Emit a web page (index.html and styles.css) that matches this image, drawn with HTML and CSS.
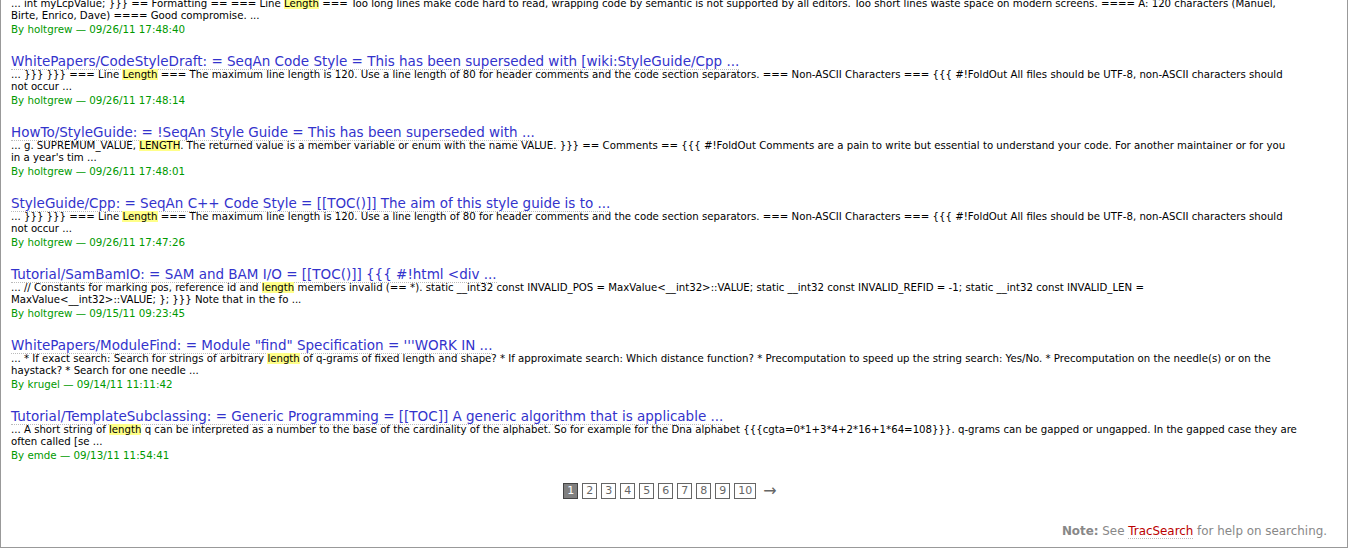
FILE: index.html
```html
<!DOCTYPE html>
<html lang="en">
<head>
<meta charset="utf-8">
<title>Search results</title>
<link rel="stylesheet" href="styles.css">
</head>
<body>
<div class="page">
  <div class="results">
    <div class="result first">
      <div class="excerpt">... int myLcpValue; }}} == Formatting == === Line <span class="hl">Length</span> === Too long lines make code hard to read, wrapping code by semantic is not supported by all editors. Too short lines waste space on modern screens. ==== A: 120 characters (Manuel,<br>Birte, Enrico, Dave) ==== Good compromise. ...</div>
      <div class="meta">By holtgrew — 09/26/11 17:48:40</div>
    </div>
    <div class="result">
      <div class="title"><a href="#">WhitePapers/CodeStyleDraft: = SeqAn Code Style = This has been superseded with [wiki:StyleGuide/Cpp ...</a></div>
      <div class="excerpt">... }}} }}} === Line <span class="hl">Length</span> === The maximum line length is 120. Use a line length of 80 for header comments and the code section separators. === Non-ASCII Characters === {{{ #!FoldOut All files should be UTF-8, non-ASCII characters should<br>not occur ...</div>
      <div class="meta">By holtgrew — 09/26/11 17:48:14</div>
    </div>
    <div class="result">
      <div class="title"><a href="#">HowTo/StyleGuide: = !SeqAn Style Guide = This has been superseded with ...</a></div>
      <div class="excerpt">... g. SUPREMUM_VALUE, <span class="hl">LENGTH</span>. The returned value is a member variable or enum with the name VALUE. }}} == Comments == {{{ #!FoldOut Comments are a pain to write but essential to understand your code. For another maintainer or for you<br>in a year's tim ...</div>
      <div class="meta">By holtgrew — 09/26/11 17:48:01</div>
    </div>
    <div class="result">
      <div class="title"><a href="#">StyleGuide/Cpp: = SeqAn C++ Code Style = [[TOC()]] The aim of this style guide is to ...</a></div>
      <div class="excerpt">... }}} }}} === Line <span class="hl">Length</span> === The maximum line length is 120. Use a line length of 80 for header comments and the code section separators. === Non-ASCII Characters === {{{ #!FoldOut All files should be UTF-8, non-ASCII characters should<br>not occur ...</div>
      <div class="meta">By holtgrew — 09/26/11 17:47:26</div>
    </div>
    <div class="result">
      <div class="title"><a href="#">Tutorial/SamBamIO: = SAM and BAM I/O = [[TOC()]] {{{ #!html &lt;div ...</a></div>
      <div class="excerpt">... // Constants for marking pos, reference id and <span class="hl">length</span> members invalid (== *). static __int32 const INVALID_POS = MaxValue&lt;__int32&gt;::VALUE; static __int32 const INVALID_REFID = -1; static __int32 const INVALID_LEN =<br>MaxValue&lt;__int32&gt;::VALUE; }; }}} Note that in the fo ...</div>
      <div class="meta">By holtgrew — 09/15/11 09:23:45</div>
    </div>
    <div class="result">
      <div class="title"><a href="#">WhitePapers/ModuleFind: = Module "find" Specification = '''WORK IN ...</a></div>
      <div class="excerpt">... * If exact search: Search for strings of arbitrary <span class="hl">length</span> of q-grams of fixed length and shape? * If approximate search: Which distance function? * Precomputation to speed up the string search: Yes/No. * Precomputation on the needle(s) or on the<br>haystack? * Search for one needle ...</div>
      <div class="meta">By krugel — 09/14/11 11:11:42</div>
    </div>
    <div class="result">
      <div class="title"><a href="#">Tutorial/TemplateSubclassing: = Generic Programming = [[TOC]] A generic algorithm that is applicable ...</a></div>
      <div class="excerpt">... A short string of <span class="hl">length</span> q can be interpreted as a number to the base of the cardinality of the alphabet. So for example for the Dna alphabet {{{cgta=0*1+3*4+2*16+1*64=108}}}. q-grams can be gapped or ungapped. In the gapped case they are<br>often called [se ...</div>
      <div class="meta">By emde — 09/13/11 11:54:41</div>
    </div>
  </div>
  <div class="paging">
    <span class="pg current">1</span>
    <a class="pg" href="#">2</a>
    <a class="pg" href="#">3</a>
    <a class="pg" href="#">4</a>
    <a class="pg" href="#">5</a>
    <a class="pg" href="#">6</a>
    <a class="pg" href="#">7</a>
    <a class="pg" href="#">8</a>
    <a class="pg" href="#">9</a>
    <a class="pg" href="#">10</a>
    <a class="next" href="#">→</a>
  </div>
  <div class="help"><strong>Note:</strong> See <a href="#">TracSearch</a> for help on searching.</div>
</div>
</body>
</html>
```
FILE: styles.css
```css
html, body {
  margin: 0;
  padding: 0;
  background: #fff;
}
body {
  font-family: "DejaVu Sans", Verdana, sans-serif;
  color: #000;
}
.page {
  width: 1348px;
  height: 548px;
  box-sizing: border-box;
  border: 1px solid #999;
  border-top: 0;
  padding: 0 20px 0 10px;
  overflow: hidden;
}
.result {
  margin-bottom: 18.5px;
}
.result.first {
  margin-top: -2.25px;
}
.title {
  font-size: 13.5px;
  line-height: 15px;
}
.title a {
  color: #3333cc;
  text-decoration: none;
  border-bottom: 1px dotted #bbb;
}
.excerpt {
  font-size: 10.18px;
  line-height: 12.5px;
  white-space: nowrap;
}
.hl {
  background: #ff8;
}
.meta {
  font-size: 10.3px;
  line-height: 12.5px;
  color: #090;
}
.paging {
  display: flex;
  justify-content: center;
  align-items: center;
  gap: 4px;
  height: 22px;
  margin-top: 1px;
  font-size: 11px;
  padding-left: 2px;
}
.pg {
  display: block;
  border: 1px solid #666;
  color: #666;
  padding: 0 3px;
  line-height: 14px;
  text-decoration: none;
}
.pg.current {
  background: #808080;
  border-color: #444;
  color: #fff;
}
.next {
  color: #666;
  text-decoration: none;
  font-size: 16px;
  margin-left: 3px;
}
.help {
  margin-top: 22px;
  text-align: right;
  font-size: 11.9px;
  line-height: 14px;
  color: #888;
}
.help strong {
  color: #888;
}
.help a {
  color: #b00;
  text-decoration: none;
  border-bottom: 1px dotted #bbb;
}
```
